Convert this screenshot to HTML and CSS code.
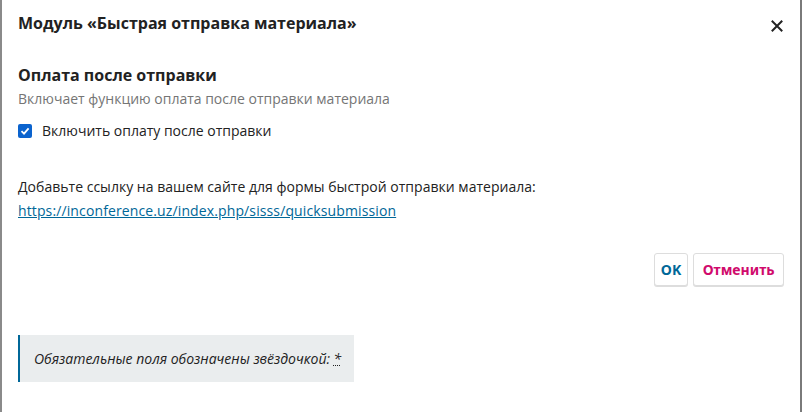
FILE: index.html
```html
<!DOCTYPE html>
<html lang="ru">
<head>
<meta charset="utf-8">
<link rel="stylesheet" href="styles.css">
</head>
<body>
<div class="modal">
  <div class="header">
    <h2 class="title">Модуль «Быстрая отправка материала»</h2>
    <button class="close" aria-label="Закрыть">
      <svg width="12" height="12" viewBox="0 0 12 12"><path d="M1.5 1.5 L10.5 10.5 M10.5 1.5 L1.5 10.5" stroke="#222" stroke-width="2" stroke-linecap="square"/></svg>
    </button>
  </div>
  <div class="content">
    <h3 class="section-title">Оплата после отправки</h3>
    <p class="desc">Включает функцию оплата после отправки материала</p>
    <label class="check">
      <span class="box"><svg width="10" height="10" viewBox="0 0 10 10"><path d="M1.5 5.2 L4 7.6 L8.6 2.4" fill="none" stroke="#fff" stroke-width="1.8"/></svg></span>
      <span>Включить оплату после отправки</span>
    </label>
    <p class="info">Добавьте ссылку на вашем сайте для формы быстрой отправки материала:</p>
    <a class="link" href="#">https://inconference.uz/index.php/sisss/quicksubmission</a>
    <div class="buttons">
      <button class="btn ok">OK</button>
      <button class="btn cancel">Отменить</button>
    </div>
    <div class="note">Обязательные поля обозначены звёздочкой: <abbr class="req">*</abbr></div>
  </div>
</div>
</body>
</html>
```
FILE: styles.css
```css
html, body {
  margin: 0;
  padding: 0;
  background: #fff;
}
body {
  font-family: "Open Sans", "Noto Sans", sans-serif;
  color: #222;
}
.modal {
  width: 802px;
  height: 412px;
  box-sizing: border-box;
  border-left: 2px solid #8a8a8a;
  border-right: 2px solid #7a7a7a;
  background: #fff;
}
.header {
  display: flex;
  align-items: center;
  justify-content: space-between;
  height: 46px;
  padding: 0 16px 0 16px;
}
.title {
  margin: 0;
  font-size: 16px;
  font-weight: 700;
  line-height: 22px;
}
.close {
  border: 0;
  background: none;
  padding: 0;
  width: 14px;
  height: 14px;
  margin-top: 6px;
  display: flex;
  align-items: center;
  justify-content: center;
}
.content {
  padding: 17px 16px 0 16px;
}
.section-title {
  margin: 0;
  font-size: 16px;
  font-weight: 700;
  line-height: 24px;
}
.desc {
  margin: 2px 0 0;
  font-size: 14px;
  line-height: 20px;
  color: #757575;
}
.check {
  display: flex;
  align-items: center;
  gap: 10px;
  margin-top: 12px;
  font-size: 14px;
  line-height: 20px;
}
.box {
  width: 14px;
  height: 14px;
  border-radius: 2px;
  background: #0b63ce;
  display: flex;
  align-items: center;
  justify-content: center;
}
.info {
  margin: 34px 0 0;
  font-size: 14px;
  line-height: 24px;
  letter-spacing: 0.02px;
}
.link {
  display: block;
  font-size: 14px;
  line-height: 24px;
  color: #006798;
  letter-spacing: 0.12px;
}
.buttons {
  display: flex;
  justify-content: flex-end;
  gap: 5px;
  margin-top: 30px;
}
.btn {
  height: 33px;
  padding: 0 8px;
  border: 1px solid #ddd;
  border-radius: 3px;
  background: #fff;
  box-shadow: 0 1px 0 #ddd;
  font-family: "Noto Sans", sans-serif;
  font-size: 14px;
  font-weight: 700;
}
.ok { color: #006798; padding: 0 6px; }
.cancel { color: #d00a6c; padding: 0 8.5px; }
.note {
  display: inline-block;
  margin-top: 49px;
  padding: 0 13px 0 14px;
  height: 47px;
  line-height: 47px;
  background: #eaedee;
  border-left: 2px solid #006798;
  font-size: 14px;
  font-style: italic;
  color: #222;
}
.req {
  text-decoration: underline dotted;
  text-decoration-thickness: 1px;
}
```
